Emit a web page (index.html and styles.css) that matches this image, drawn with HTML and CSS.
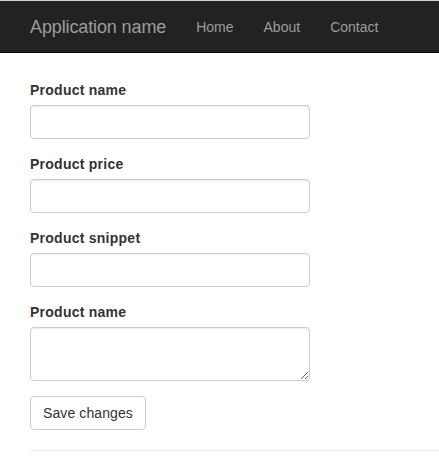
FILE: index.html
```html
<!DOCTYPE html>
<html>
<head>
<meta charset="utf-8">
<title>Application name</title>
<link rel="stylesheet" href="styles.css">
</head>
<body>
<nav class="navbar">
  <a class="brand" href="#">Application name</a>
  <ul class="nav">
    <li><a href="#">Home</a></li>
    <li><a href="#">About</a></li>
    <li><a href="#">Contact</a></li>
  </ul>
</nav>
<main class="content">
  <form class="form">
    <div class="group">
      <label class="label">Product name</label>
      <input class="control" type="text">
    </div>
    <div class="group">
      <label class="label">Product price</label>
      <input class="control" type="text">
    </div>
    <div class="group">
      <label class="label">Product snippet</label>
      <input class="control" type="text">
    </div>
    <div class="group">
      <label class="label">Product name</label>
      <textarea class="control area" rows="2"></textarea>
    </div>
    <button class="btn" type="button">Save changes</button>
  </form>
  <hr class="rule">
</main>
</body>
</html>
```
FILE: styles.css
```css
* { box-sizing: border-box; }
html, body { margin: 0; padding: 0; }
body {
  font-family: "Liberation Sans", Arial, Helvetica, sans-serif;
  font-size: 14px;
  line-height: 20px;
  color: #333;
  background: #fff;
}
.navbar {
  display: flex;
  align-items: flex-start;
  height: 53px;
  background: #222;
  border-top: 1px solid #d0d0d0;
  border-bottom: 1px solid #080808;
  padding: 0 15px;
}
.brand {
  display: block;
  padding: 16px 15px 14px;
  font-size: 18px;
  line-height: 20px;
  letter-spacing: -0.12px;
  color: #9d9d9d;
  text-decoration: none;
}
.nav {
  display: flex;
  list-style: none;
  margin: 0;
  padding: 0;
}
.nav a {
  display: block;
  padding: 16px 15px 14px;
  line-height: 20px;
  color: #9d9d9d;
  text-decoration: none;
}
.content {
  padding: 27px 0 0 30px;
}
.group {
  margin-bottom: 15px;
}
.label {
  display: inline-block;
  margin-bottom: 5px;
  font-weight: bold;
  letter-spacing: 0.25px;
}
.control {
  display: block;
  width: 280px;
  height: 34px;
  padding: 6px 12px;
  font-family: inherit;
  font-size: 14px;
  line-height: 20px;
  color: #555;
  background: #fff;
  border: 1px solid #ccc;
  border-radius: 4px;
  box-shadow: inset 0 1px 1px rgba(0,0,0,0.075);
  margin: 0;
}
.area {
  height: 54px;
  resize: vertical;
}
.btn {
  display: inline-block;
  height: 34px;
  padding: 6px 12px;
  font-family: inherit;
  font-size: 14px;
  line-height: 20px;
  letter-spacing: 0.1px;
  color: #333;
  background: #fff;
  border: 1px solid #ccc;
  border-radius: 4px;
  margin: 0;
}
.rule {
  margin: 20px 0 0 0;
  border: 0;
  border-top: 1px solid #eee;
}
```
